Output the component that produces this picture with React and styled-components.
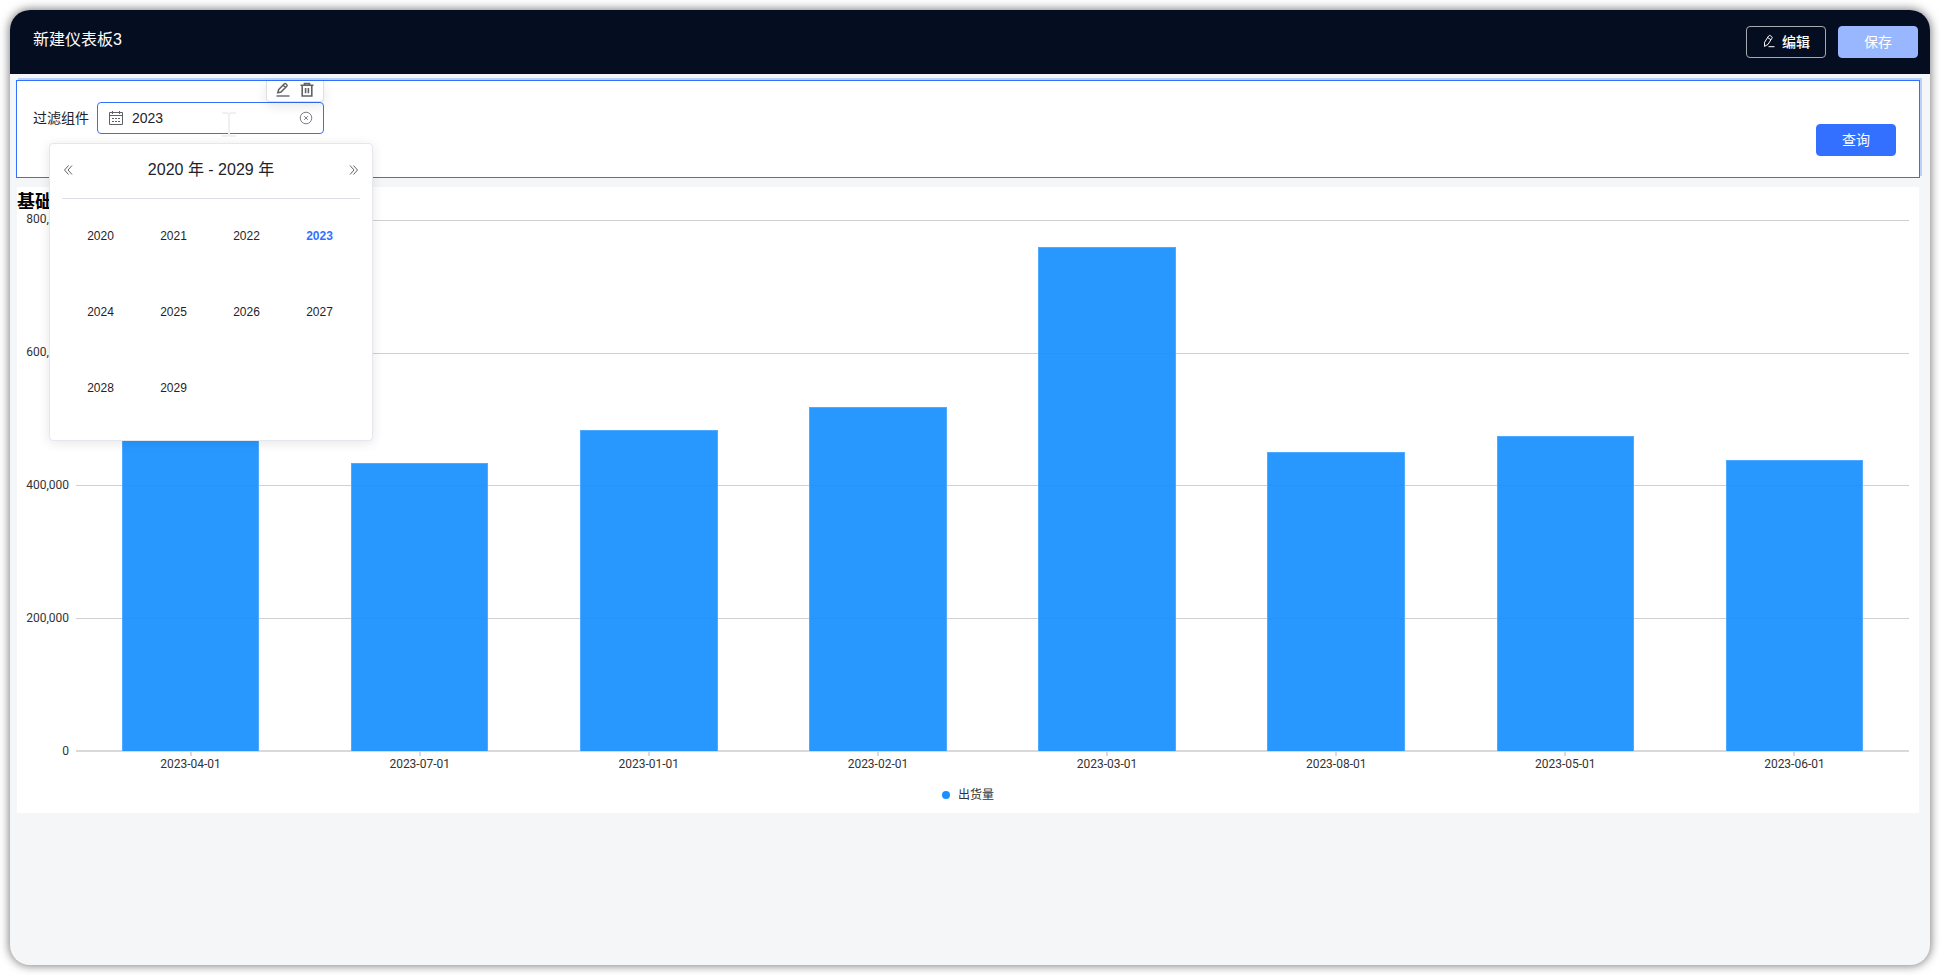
import React, { useState } from 'react';
import styled, { createGlobalStyle } from 'styled-components';

const GlobalStyle = createGlobalStyle`
  * {
    box-sizing: border-box;
  }

  body {
    margin: 0;
    background: #fff;
    color: #1f2329;
    font-family: "Liberation Sans", "Noto Sans CJK SC", sans-serif;
    font-size: 14px;
  }

  button, input {
    font-family: inherit;
  }
`;

const Window = styled.div`
  min-height: calc(100vh - 20px);
  margin: 10px;
  border-radius: 20px;
  background: #f5f6f7;
  box-shadow: 0 0 10px 1px rgba(0, 0, 0, 0.5);
  overflow: hidden;
`;

const Header = styled.header`
  display: flex;
  justify-content: space-between;
  align-items: flex-start;
  height: 64px;
  padding: 16px 12px 0 23px;
  background: #050e21;
`;

const BoardName = styled.h1`
  margin: 0;
  color: #fff;
  font-size: 16px;
  font-weight: 400;
  line-height: 28px;
`;

const Actions = styled.div`
  display: flex;
  gap: 12px;
`;

const Button = styled.button`
  display: flex;
  align-items: center;
  justify-content: center;
  gap: 6px;
  width: 80px;
  height: 32px;
  padding: 0 0 2px;
  border: 1px solid ${({ $border, $bg }) => $border || $bg};
  border-radius: 4px;
  background: ${({ $bg }) => $bg};
  color: #fff;
  font-size: 14px;
  font-weight: ${({ $strong }) => ($strong ? 500 : 400)};
  cursor: pointer;
`;

const Canvas = styled.main`
  padding: 6px 10px 20px 6px;
`;

const FilterPanel = styled.section`
  position: relative;
  display: flex;
  justify-content: space-between;
  align-items: flex-start;
  padding: 21px 23px 21px 16px;
  border: 1px solid #3370ff;
  background: #fff;
  box-shadow: 2px -2px 0 #b9d2fb;
`;

const FilterItem = styled.div`
  display: flex;
  align-items: center;
  gap: 8px;
`;

const FilterLabel = styled.label`
  width: 56px;
  line-height: 32px;
  white-space: nowrap;
`;

const QueryArea = styled.div`
  padding-top: 22px;
`;

const DatePicker = styled.div`
  position: relative;
  width: 227px;
`;

const DateBox = styled.div`
  display: flex;
  align-items: center;
  height: 32px;
  padding: 0 10px;
  border: 1px solid #3370ff;
  border-radius: 4px;
  background: #fff;
`;

const DateInput = styled.input`
  flex: 1;
  min-width: 0;
  padding: 0 8px;
  border: 0;
  outline: 0;
  background: none;
  color: #1f2329;
  font-size: 14px;
`;

const IconButton = styled.button`
  display: flex;
  padding: 0;
  border: 0;
  background: none;
  color: ${({ $color }) => $color || '#606266'};
  cursor: pointer;
`;

const ItemTools = styled.div`
  position: absolute;
  right: 0;
  bottom: 100%;
  display: flex;
  align-items: center;
  justify-content: center;
  gap: 8px;
  width: 58px;
  height: 21px;
  padding-bottom: 2px;
  border: 1px solid #dcdfe6;
  border-top: 0;
  border-radius: 0 0 4px 4px;
  background: #fff;
  box-shadow: 0 4px 12px rgba(0, 0, 0, 0.1);
`;

const TextCursor = styled.svg`
  position: absolute;
  top: 10px;
  left: 125px;
  pointer-events: none;
`;

const YearPanel = styled.div`
  position: absolute;
  top: 41px;
  left: -48px;
  z-index: 10;
  width: 324px;
  padding: 12px 12px 13px;
  border: 1px solid #e4e7ed;
  border-radius: 4px;
  background: #fff;
  box-shadow: 0 2px 12px rgba(0, 0, 0, 0.1);
`;

const YearHeader = styled.div`
  display: flex;
  align-items: center;
  justify-content: space-between;
  height: 43px;
  padding-bottom: 15px;
  border-bottom: 1px solid #dcdfe6;
`;

const YearRange = styled.span`
  font-size: 16px;
  line-height: 28px;
`;

const YearTable = styled.table`
  width: 292px;
  margin-left: 2px;
  border-collapse: collapse;
  table-layout: fixed;

  td {
    height: 76px;
    padding: 0;
    text-align: center;
  }
`;

const Year = styled.button`
  padding: 7px 8px 9px;
  border: 0;
  background: none;
  color: ${({ $active }) => ($active ? '#3370ff' : '#1f2329')};
  font-size: 12px;
  font-weight: ${({ $active }) => ($active ? 700 : 400)};
  cursor: pointer;
`;

const ChartCard = styled.section`
  margin: 9px 1px 0;
  padding: 0 10px 10px 0;
  background: #fff;
`;

const ChartTitle = styled.h2`
  margin: 0;
  color: #000;
  font-size: 18px;
  font-weight: 700;
  line-height: 30px;
`;

const ChartGrid = styled.div`
  display: grid;
  grid-template-columns: 52px 1fr;
  column-gap: 7px;
  padding-top: 3px;
  color: #333;
  font-family: Roboto, "Noto Sans CJK SC", sans-serif;
  font-size: 12px;
`;

const YAxis = styled.div`
  display: flex;
  flex-direction: column;
  justify-content: space-between;
  margin: -8px 0 -6px;
  line-height: 14px;
  text-align: right;
`;

const Plot = styled.div`
  display: grid;
  height: 532px;

  > * {
    grid-area: 1 / 1;
  }
`;

const GridLines = styled.div`
  display: flex;
  flex-direction: column;
  justify-content: space-between;
`;

const Line = styled.div`
  height: ${({ $axis }) => ($axis ? 2 : 1)}px;
  background: ${({ $axis }) => ($axis ? '#d9d9d9' : '#d0d0d0')};
`;

const Bars = styled.div`
  display: flex;
  align-items: flex-end;
  padding-bottom: 1px;
`;

const BarSlot = styled.div`
  display: flex;
  flex: 1;
  align-items: flex-end;
  justify-content: center;
  height: 100%;
`;

const Bar = styled.div`
  width: 60%;
  border: 1px solid #4fa9ff;
  border-bottom: 0;
  background: rgba(24, 144, 255, 0.93);
`;

const XAxis = styled.div`
  display: flex;
  grid-column: 2;
`;

const XLabel = styled.div`
  display: flex;
  flex: 1;
  flex-direction: column;
  align-items: center;
  line-height: 16px;

  &::before {
    content: "";
    width: 2px;
    height: 4px;
    background: #d9d9d9;
  }
`;

const Legend = styled.div`
  display: flex;
  align-items: center;
  justify-content: center;
  gap: 8px;
  padding: 15px 0 0 10px;
  color: #333;
  font-size: 12px;
  line-height: 16px;
`;

const Dot = styled.span`
  width: 8px;
  height: 8px;
  border-radius: 50%;
  background: #1890ff;
`;

const years = [
  [2020, 2021, 2022, 2023],
  [2024, 2025, 2026, 2027],
  [2028, 2029],
];

const MAX = 800000;
const ticks = ['800,000', '600,000', '400,000', '200,000', '0'];

const shipments = [
  { date: '2023-04-01', value: 480000 },
  { date: '2023-07-01', value: 434000 },
  { date: '2023-01-01', value: 484000 },
  { date: '2023-02-01', value: 518000 },
  { date: '2023-03-01', value: 760000 },
  { date: '2023-08-01', value: 451000 },
  { date: '2023-05-01', value: 475000 },
  { date: '2023-06-01', value: 439000 },
];

const PenIcon = () => (
  <svg width="14" height="14" viewBox="0 0 14 14" fill="none" stroke="currentColor">
    <path d="M2.6 8.2 6.6 2a1.2 1.2 0 0 1 1.6-.4l1.4.9a1.2 1.2 0 0 1 .4 1.6l-4 6.3-3.5 2zM5.6 3.6l3.3 2.1" />
    <path d="M6.5 12.7h6" />
  </svg>
);

const EditIcon = () => (
  <svg width="16" height="16" viewBox="0 0 16 16" fill="none" stroke="currentColor">
    <path d="M2.8 10.8 3.6 7.6 9.4 1.8a1 1 0 0 1 1.4 0l1 1a1 1 0 0 1 0 1.4L6 10zM8.2 3.2l2.3 2.3" strokeWidth="1.5" />
    <path d="M1.5 14h13" strokeWidth="2" stroke="#909399" />
  </svg>
);

const TrashIcon = () => (
  <svg width="16" height="16" viewBox="0 0 16 16" fill="none" stroke="currentColor" strokeWidth="1.6">
    <path d="M1.5 3.2h13M5.5 2.7V1.5h5v1.2M3.2 3.5v10.5h9.6V3.5M6.6 6v5.2M9.4 6v5.2" />
  </svg>
);

const CalendarIcon = () => (
  <svg width="16" height="16" viewBox="0 0 16 16" fill="none" stroke="#606266">
    <path d="M1.5 2.5h13v12h-13zM1.5 5.5h13M4.5 1v3M11.5 1v3" />
    <path d="M4 8.5h2M7 8.5h2M10 8.5h2M4 11.5h2M7 11.5h2M10 11.5h2" />
  </svg>
);

const ClearIcon = () => (
  <svg width="14" height="14" viewBox="0 0 14 14" fill="none" stroke="currentColor">
    <circle cx="7" cy="7" r="5.8" />
    <path d="m5.2 5.2 3.6 3.6M8.8 5.2 5.2 8.8" />
  </svg>
);

const DoubleArrow = ({ flip }) => (
  <svg width="12" height="12" viewBox="0 0 12 12" fill="none" stroke="currentColor">
    <path d={flip ? 'M2 1.5 6 6l-4 4.5M5.5 1.5l4 4.5-4 4.5' : 'M10 1.5 6 6l4 4.5M6.5 1.5 2.5 6l4 4.5'} />
  </svg>
);

const YearPicker = () => {
  const [year, setYear] = useState('2023');

  return (
    <DatePicker>
      <DateBox>
        <CalendarIcon />
        <DateInput id="filter-year" value={year} onChange={(e) => setYear(e.target.value)} />
        <IconButton type="button" aria-label="清除" $color="#7d8087" onClick={() => setYear('')}>
          <ClearIcon />
        </IconButton>
      </DateBox>
      <ItemTools>
        <IconButton type="button" aria-label="编辑"><EditIcon /></IconButton>
        <IconButton type="button" aria-label="删除"><TrashIcon /></IconButton>
      </ItemTools>
      <TextCursor width="14" height="25" viewBox="0 0 14 25" fill="none" stroke="#f0f0f0" strokeWidth="2">
        <path d="M0 1h5l2 1 2-1h5M7 2v21M0 24h5l2-1 2 1h5" />
      </TextCursor>
      <YearPanel>
        <YearHeader>
          <IconButton type="button" aria-label="前十年"><DoubleArrow /></IconButton>
          <YearRange>2020 年 - 2029 年</YearRange>
          <IconButton type="button" aria-label="后十年"><DoubleArrow flip /></IconButton>
        </YearHeader>
        <YearTable>
          <tbody>
            {years.map((row) => (
              <tr key={row[0]}>
                {[0, 1, 2, 3].map((i) => (
                  <td key={i}>
                    {row[i] && (
                      <Year type="button" $active={String(row[i]) === year} onClick={() => setYear(String(row[i]))}>
                        {row[i]}
                      </Year>
                    )}
                  </td>
                ))}
              </tr>
            ))}
          </tbody>
        </YearTable>
      </YearPanel>
    </DatePicker>
  );
};

const BarChart = () => (
  <ChartCard>
    <ChartTitle>基础柱状图</ChartTitle>
    <ChartGrid>
      <YAxis>
        {ticks.map((t) => <span key={t}>{t}</span>)}
      </YAxis>
      <Plot>
        <GridLines>
          {ticks.map((t) => <Line key={t} $axis={t === '0'} />)}
        </GridLines>
        <Bars>
          {shipments.map((s) => (
            <BarSlot key={s.date}>
              <Bar style={{ height: `${(s.value / MAX) * 100}%` }} />
            </BarSlot>
          ))}
        </Bars>
      </Plot>
      <XAxis>
        {shipments.map((s) => <XLabel key={s.date}>{s.date}</XLabel>)}
      </XAxis>
    </ChartGrid>
    <Legend>
      <Dot />
      出货量
    </Legend>
  </ChartCard>
);

export default function App() {
  return (
    <>
      <GlobalStyle />
      <Window>
        <Header>
          <BoardName>新建仪表板3</BoardName>
          <Actions>
            <Button type="button" $bg="transparent" $border="#a6a9b0" $strong>
              <PenIcon />
              编辑
            </Button>
            <Button type="button" $bg="#99b7ff">保存</Button>
          </Actions>
        </Header>
        <Canvas>
          <FilterPanel>
            <FilterItem>
              <FilterLabel htmlFor="filter-year">过滤组件</FilterLabel>
              <YearPicker />
            </FilterItem>
            <QueryArea>
              <Button type="button" $bg="#3370ff">查询</Button>
            </QueryArea>
          </FilterPanel>
          <BarChart />
        </Canvas>
      </Window>
    </>
  );
}
